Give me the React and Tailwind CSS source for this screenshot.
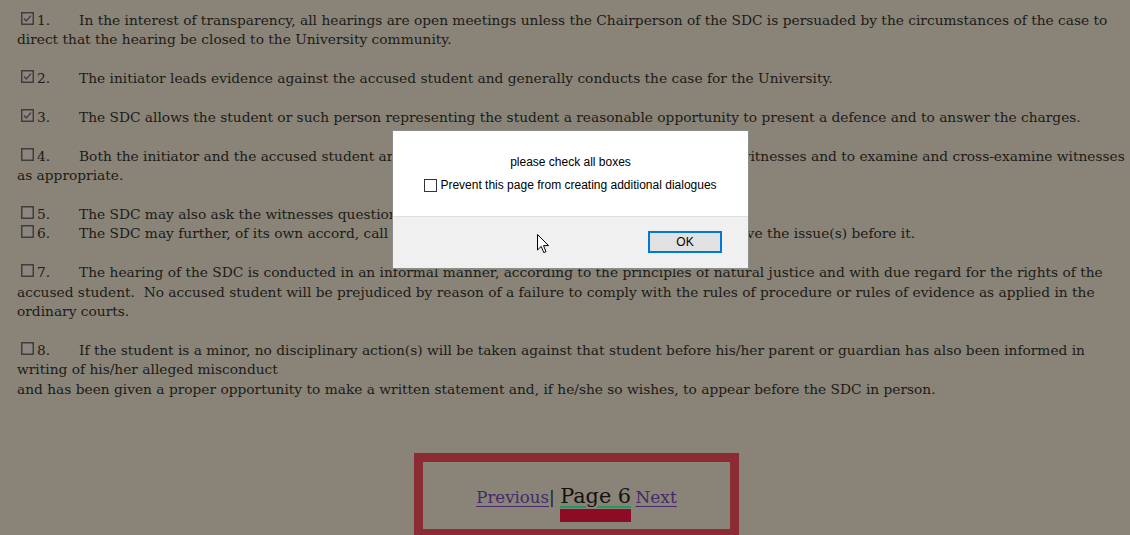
import React from 'react';

const items = [
  {
    n: '1.',
    checked: true,
    lines: [
      'In the interest of transparency, all hearings are open meetings unless the Chairperson of the SDC is persuaded by the circumstances of the case to',
      'direct that the hearing be closed to the University community.',
    ],
  },
  {
    n: '2.',
    checked: true,
    lines: ['The initiator leads evidence against the accused student and generally conducts the case for the University.'],
  },
  {
    n: '3.',
    checked: true,
    lines: ['The SDC allows the student or such person representing the student a reasonable opportunity to present a defence and to answer the charges.'],
  },
  {
    n: '4.',
    lines: [
      'Both the initiator and the accused student are entitled to produce evidence, to call upon their witnesses and to examine and cross-examine witnesses',
      'as appropriate.',
    ],
  },
  {
    n: '5.',
    lines: ['The SDC may also ask the witnesses questions.'],
    second: {
      n: '6.',
      text: 'The SDC may further, of its own accord, call any witness whose evidence could assist it to resolve the issue(s) before it.',
    },
  },
  {
    n: '7.',
    lines: [
      'The hearing of the SDC is conducted in an informal manner, according to the principles of natural justice and with due regard for the rights of the',
      'accused student.  No accused student will be prejudiced by reason of a failure to comply with the rules of procedure or rules of evidence as applied in the',
      'ordinary courts.',
    ],
  },
  {
    n: '8.',
    lines: [
      'If the student is a minor, no disciplinary action(s) will be taken against that student before his/her parent or guardian has also been informed in',
      'writing of his/her alleged misconduct',
      'and has been given a proper opportunity to make a written statement and, if he/she so wishes, to appear before the SDC in person.',
    ],
  },
];

function Box({ checked }) {
  return (
    <svg width="13" height="13" viewBox="0 0 13 13" className="inline-block align-baseline ml-[4px]">
      <rect x="0.75" y="0.75" width="11.5" height="11.5" fill="#8b8780" stroke="#3f3e3b" strokeWidth="1.5" />
      {checked && <path d="M3 6.5 L5.3 9 L10 3.6" fill="none" stroke="#3f3e3b" strokeWidth="1.4" />}
    </svg>
  );
}

function Lead({ checked, n }) {
  return (
    <>
      <Box checked={checked} />
      <span className="inline-block w-[45px] pl-[3px]">{n}</span>
    </>
  );
}

export default function App() {
  return (
    <div className="relative w-[1130px] h-[535px] overflow-hidden bg-[#898477]">
      <div className="w-[1153px] pl-[17px] pt-[11px] font-['DejaVu_Serif',serif] text-[13.75px] leading-[19.4px] text-[#1d1b18]">
        {items.map((it) => (
          <p key={it.n} className="whitespace-pre mb-[19.4px]">
            <Lead checked={it.checked} n={it.n} />
            {it.lines.map((l, i) => (
              <React.Fragment key={i}>
                {i > 0 && <br />}
                {l}
              </React.Fragment>
            ))}
            {it.second && (
              <>
                <br />
                <Lead n={it.second.n} />
                {it.second.text}
              </>
            )}
          </p>
        ))}

        {/* pagination */}
        <div className="mt-[54px] ml-[397px] w-[325px] h-[85px] border-[9px] border-[#8b2b33] pt-[20px] text-center leading-[28px]">
          <a className="text-[16.6px] text-[#45296b] underline underline-offset-[3px]">Previous</a>
          <span className="text-[17px]">|</span>{' '}
          <span className="relative ml-[1px] text-[20.8px] text-[#141210] underline decoration-[#1f9a5c] underline-offset-[3px]">
            Page 6
            <span className="absolute left-0 right-0 top-full mt-[1px] h-[13px] bg-[#8b0c24]"></span>
          </span>{' '}
          <a className="text-[17px] text-[#45296b] underline underline-offset-[3px]">Next</a>
        </div>
      </div>

      {/* alert dialog */}
      <div className="absolute left-[392px] top-[130px] w-[357px] h-[139px] bg-white border border-[#8c8c8c] flex flex-col font-['Liberation_Sans',sans-serif] text-[12px] text-black">
        <div className="h-[85px] flex flex-col items-center pt-[24px] leading-[14px]">
          <div>please check all boxes</div>
          <div className="flex items-center gap-[3px] mt-[9px]">
            <span className="w-[13px] h-[13px] border border-[#333333] bg-white"></span>
            <span>Prevent this page from creating additional dialogues</span>
          </div>
        </div>
        <div className="flex-1 bg-[#f0f0f0] border-t border-[#dfdfdf] flex justify-end items-start pt-[14px] pr-[26px]">
          <button className="w-[74px] h-[22px] border-2 border-[#0078d7] bg-[#e1e1e1] text-[12px] leading-none">OK</button>
        </div>
      </div>

      {/* mouse pointer */}
      <svg width="13" height="20" viewBox="0 0 13 20" className="absolute left-[537px] top-[234px]">
        <path d="M0.5 0.5 L0.5 16 L4.2 12.4 L6.8 18.6 L9 17.6 L6.5 11.6 L11.5 11.6 Z" fill="white" stroke="black" strokeWidth="1" strokeLinejoin="round" />
      </svg>
    </div>
  );
}
